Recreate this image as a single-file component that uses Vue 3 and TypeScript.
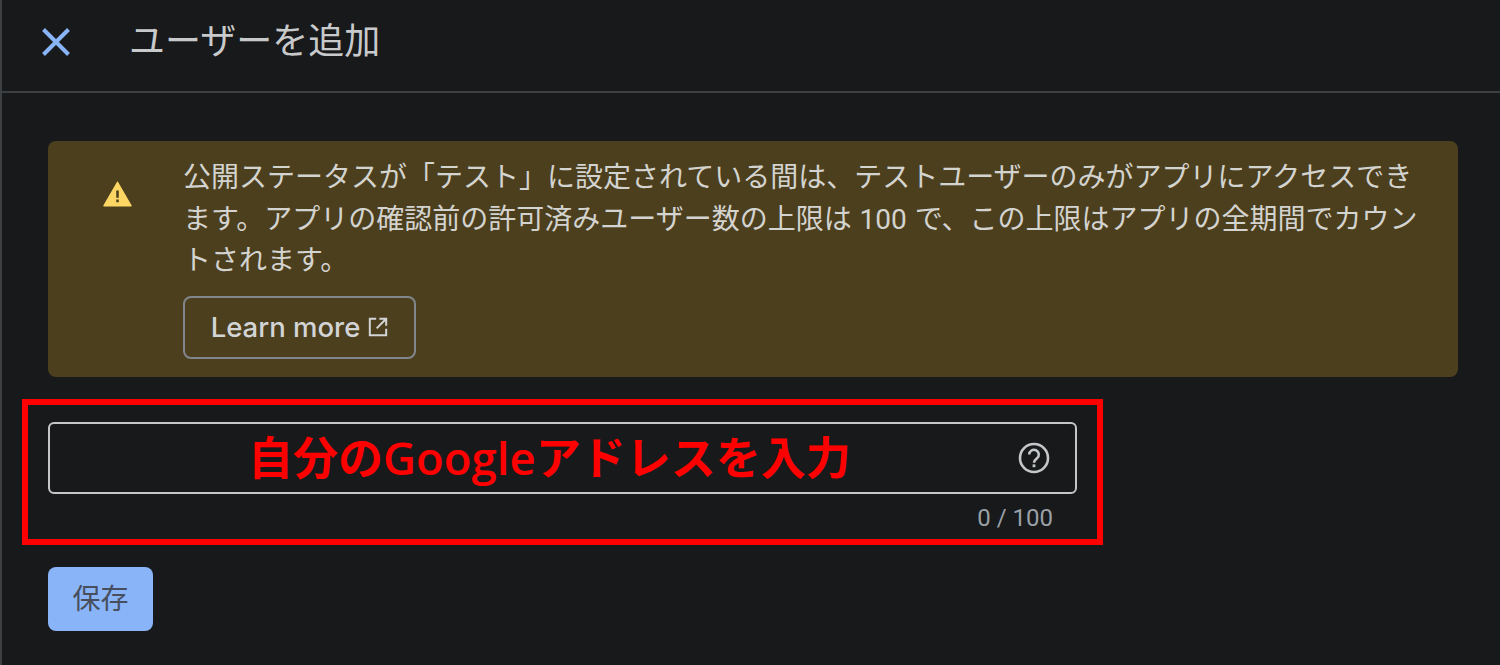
<template>
  <div class="page">
    <header class="top-bar">
      <button class="close-btn" type="button" aria-label="閉じる">
        <svg width="36" height="36" viewBox="0 0 36 36">
          <path d="M5.5 5.5 30.5 30.5M30.5 5.5 5.5 30.5" fill="none" stroke="#8ab4f8" stroke-width="4" />
        </svg>
      </button>
      <h1 class="title">ユーザーを追加</h1>
    </header>

    <main class="content">
      <section class="banner">
        <div class="banner-icon">
          <svg width="29" height="26" viewBox="0 0 32 28">
            <path d="M16 1 31 27H1Z" fill="#fdd663" stroke="#fdd663" stroke-width="1.5" stroke-linejoin="round" />
            <path d="M14.6 10h2.8v8h-2.8zM14.6 20h2.8v3h-2.8z" fill="#4c3f1e" />
          </svg>
        </div>
        <div class="banner-body">
          <p class="banner-text">{{ notice }}</p>
          <a class="learn-btn">
            Learn more
            <svg width="20" height="20" viewBox="0 0 22 22">
              <path d="M9 2H2v18h18v-7M12.5 2H20v7.5M20 2 9.5 12.5" fill="none" stroke="#d3d4d6" stroke-width="2.2" />
            </svg>
          </a>
        </div>
      </section>

      <section class="mark-box">
        <div class="field">
          <span class="mark-label">自分の<span class="mark-latin">Google</span>アドレスを入力</span>
          <svg class="help-icon" width="34" height="34" viewBox="0 0 34 34">
            <circle cx="17" cy="17" r="14" fill="none" stroke="#c4c7c9" stroke-width="2.6" />
            <path d="M12.2 13.6a4.8 4.8 0 1 1 7.8 3.7c-1.8 1.4-3 2.2-3 4.4" fill="none" stroke="#c4c7c9" stroke-width="2.6" />
            <rect x="15.6" y="23.4" width="2.8" height="2.8" fill="#c4c7c9" />
          </svg>
        </div>
        <div class="counter">0 / 100</div>
      </section>

      <button class="save-btn" type="button">保存</button>
    </main>
  </div>
</template>

<script setup lang="ts">
const notice =
  '公開ステータスが「テスト」に設定されている間は、テストユーザーのみがアプリにアクセスできます。アプリの確認前の許可済みユーザー数の上限は 100 で、この上限はアプリの全期間でカウントされます。'
</script>

<style>
html,
body {
  margin: 0;
  background: #18191b;
}
</style>

<style scoped>
.page {
  box-sizing: border-box;
  width: 1500px;
  height: 665px;
  overflow: hidden;
  background: #18191b;
  border-left: 2px solid #3c4043;
  font-family: Roboto, "Noto Sans CJK JP", sans-serif;
  color: #c8c9cb;
}

.top-bar {
  box-sizing: border-box;
  height: 93px;
  display: flex;
  align-items: center;
  border-bottom: 2px solid #3c4043;
  padding: 0 0 8px 36px;
}

.close-btn {
  width: 36px;
  height: 36px;
  padding: 0;
  border: 0;
  background: none;
  display: flex;
}

.title {
  margin: 0 0 0 55px;
  font-size: 36px;
  font-weight: 400;
  line-height: 44px;
  color: #c8c9cb;
}

.content {
  padding: 48px 0 0 46px;
}

.banner {
  box-sizing: border-box;
  width: 1410px;
  height: 236px;
  display: flex;
  background: #4c3f1e;
  border-radius: 8px;
}

.banner-icon {
  width: 135px;
  flex: none;
  display: flex;
  justify-content: center;
  padding: 40px 0 0 3px;
  box-sizing: border-box;
}

.banner-body {
  width: 1240px;
  padding-top: 16px;
}

.banner-text {
  margin: 0;
  font-size: 28px;
  line-height: 41.5px;
  word-spacing: 1px;
  color: #d3d3cf;
}

.learn-btn {
  box-sizing: border-box;
  width: 233px;
  height: 63px;
  margin-top: 14px;
  display: flex;
  align-items: center;
  justify-content: center;
  gap: 8px;
  border: 2px solid #80868b;
  border-radius: 8px;
  font-family: Inter, sans-serif;
  font-size: 27.5px;
  font-weight: 500;
  color: #d3d4d6;
}

.mark-box {
  box-sizing: border-box;
  width: 1081px;
  height: 146px;
  margin: 22px 0 0 -26px;
  padding: 17px 20px 0 20px;
  border: 6px solid #ff0000;
}

.field {
  box-sizing: border-box;
  position: relative;
  height: 72px;
  display: flex;
  align-items: center;
  justify-content: flex-end;
  padding-right: 24px;
  border: 2px solid #c4c7c9;
  border-radius: 6px;
}

.mark-label {
  position: absolute;
  left: 198px;
  top: 0;
  font-family: "Noto Sans CJK JP", sans-serif;
  font-size: 45px;
  line-height: 64px;
  font-weight: 700;
  color: #ff0000;
  white-space: nowrap;
}

.mark-latin {
  font-family: "Open Sans", sans-serif;
  font-size: 45.5px;
  font-weight: 600;
}

.help-icon {
  display: block;
}

.counter {
  margin: 9px 24px 0 0;
  text-align: right;
  font-size: 24px;
  line-height: 30px;
  color: #9aa0a6;
}

.save-btn {
  display: block;
  width: 105px;
  height: 64px;
  margin-top: 22px;
  padding: 0 0 4px;
  border: 0;
  border-radius: 8px;
  background: #8ab4f8;
  font-family: "Noto Sans CJK JP", sans-serif;
  font-size: 28px;
  color: #474f5e;
}
</style>
